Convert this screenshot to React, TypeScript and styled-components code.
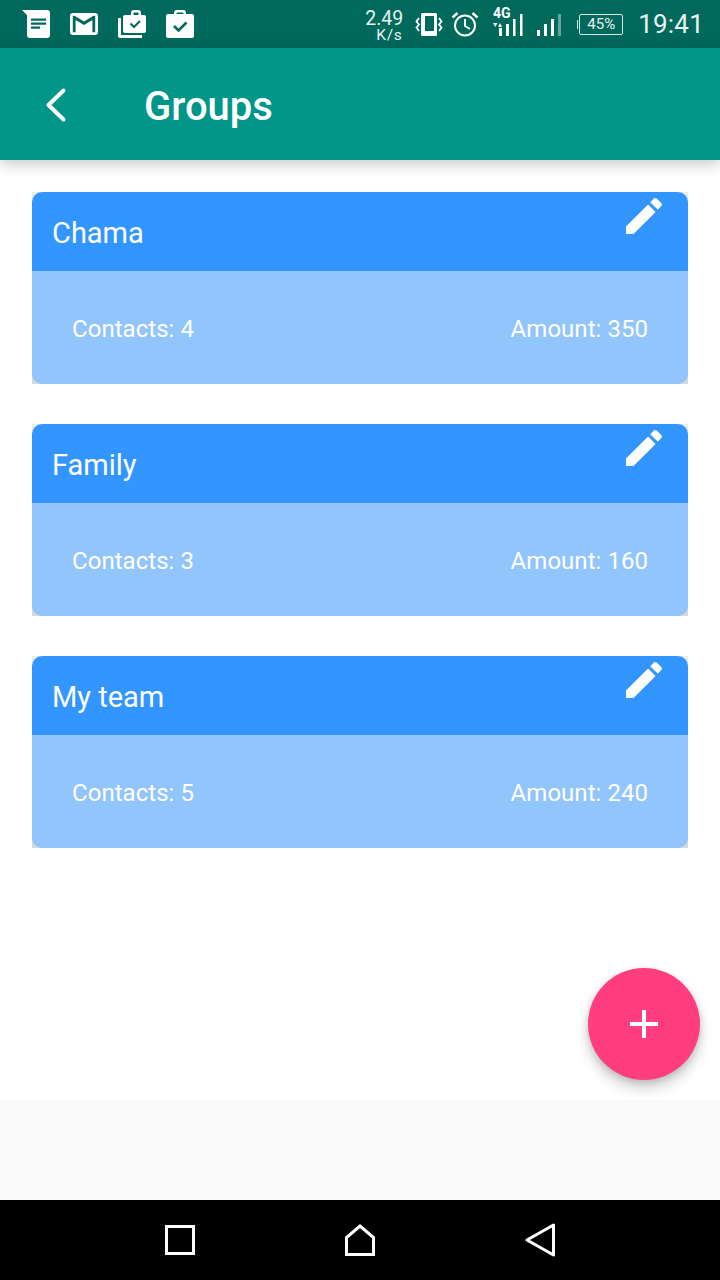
import React from "react";
import styled, { createGlobalStyle } from "styled-components";

/**
 * TYPES
 */
type Group = {
  name: string
  contacts: number
  amount: number
}

/**
 * DATA
 */
const GROUPS: Group[] = [
  { name: "Chama", contacts: 4, amount: 350 },
  { name: "Family", contacts: 3, amount: 160 },
  { name: "My team", contacts: 5, amount: 240 },
];

/**
 * STYLES
 */
const GlobalStyle = createGlobalStyle`
  html, body {
    margin: 0;
    padding: 0;
    background: #fff;
    font-family: Roboto, "Noto Sans", sans-serif;
  }
`;

const Screen = styled.div`
  width: 720px;
  height: 1280px;
  display: flex;
  flex-direction: column;
  overflow: hidden;
`;

const StatusBar = styled.div`
  height: 48px;
  flex: none;
  padding: 0 16px 0 22px;
  display: flex;
  align-items: center;
  justify-content: space-between;
  background: #00695c;
  color: #fff;
`;

const StatusGroup = styled.div`
  display: flex;
  align-items: center;
`;

const StatusIcon = styled.svg<{ $left?: number }>`
  display: block;
  flex: none;
  margin-left: ${(p) => p.$left || 0}px;
`;

const NetSpeed = styled.div`
  width: 40px;
  margin-top: 6px;
  display: flex;
  flex-direction: column;
  align-items: flex-end;
  color: #e4f1ef;
`;

const NetValue = styled.span`
  font-size: 19.5px;
  line-height: 16.5px;
`;

const NetUnit = styled.span`
  font-size: 15.5px;
  line-height: 16.5px;
  letter-spacing: 0.6px;
  margin-right: 1px;
`;

const Battery = styled.div`
  position: relative;
  width: 44px;
  height: 21px;
  margin-left: 18px;
  box-sizing: border-box;
  border: 1px solid #d5e8e5;
  border-radius: 2px;
  display: flex;
  align-items: center;
  justify-content: center;
  font-size: 15px;
  color: #e4f1ef;

  &::before {
    content: "";
    position: absolute;
    left: -3px;
    top: 5px;
    width: 1px;
    height: 9px;
    background: #d5e8e5;
  }
`;

const Clock = styled.span`
  margin-left: 15px;
  font-size: 26px;
  letter-spacing: 0.2px;
  color: #e9f4f2;
`;

const AppBar = styled.header`
  height: 112px;
  flex: none;
  position: relative;
  z-index: 1;
  padding-left: 45px;
  display: flex;
  align-items: center;
  background: #009688;
  box-shadow: 0 4px 14px rgba(0, 0, 0, 0.22);
`;

const BackIcon = styled.svg`
  display: block;
  margin-top: 2px;
`;

const Title = styled.h1`
  margin: 4px 0 0 75px;
  font-size: 40px;
  font-weight: 500;
  color: #fff;
`;

const Main = styled.main`
  flex: 1;
  position: relative;
  padding: 32px 32px 0;
  display: flex;
  flex-direction: column;
  gap: 40px;
  background: #fff;
`;

const Card = styled.section`
  height: 192px;
  flex: none;
  background: linear-gradient(#efe9e6, #d8d8d8);
`;

const CardInner = styled.div`
  height: 100%;
  display: flex;
  flex-direction: column;
  border-radius: 10px;
  overflow: hidden;
`;

const CardHeader = styled.div`
  height: 79px;
  flex: none;
  padding: 0 20px;
  display: flex;
  justify-content: space-between;
  background: #3395ff;
  color: #fff;
`;

const CardName = styled.span`
  margin-top: 23px;
  font-size: 29px;
  line-height: 36px;
`;

const EditIcon = styled.svg`
  display: block;
`;

const CardBody = styled.div`
  flex: 1;
  padding: 2px 40px 0;
  display: flex;
  align-items: center;
  justify-content: space-between;
  background: #93c5fd;
  color: #fff;
  font-size: 24px;
  letter-spacing: 0.04px;
`;

const Fab = styled.button`
  position: absolute;
  right: 20px;
  bottom: 20px;
  width: 112px;
  height: 112px;
  padding: 0;
  border: none;
  border-radius: 50%;
  display: flex;
  align-items: center;
  justify-content: center;
  background: #ff3d7f;
  box-shadow: 0 8px 14px rgba(0, 0, 0, 0.2), 0 2px 6px rgba(0, 0, 0, 0.12);
`;

const Footer = styled.div`
  height: 100px;
  flex: none;
  background: #fafafa;
`;

const NavBar = styled.nav`
  height: 80px;
  flex: none;
  display: flex;
  align-items: center;
  justify-content: center;
  gap: 150px;
  background: #000;
`;

/**
 * COMPONENT
 */
export const App = () => (
  <Screen>
    <GlobalStyle />
    <StatusBar>
      <StatusGroup>
        <StatusIcon width="28" height="28" viewBox="0 0 28 28">
          <path fill="#fff" d="M0 0h25a3 3 0 0 1 3 3v22a3 3 0 0 1-3 3H8a3 3 0 0 1-3-3V5z" />
          <path fill="#00695c" d="M9 8.500h15v2.200H9zM9 12.500h15v2.200H9zM9 16.500h9v2.200H9z" />
        </StatusIcon>
        <StatusIcon $left={20} width="28" height="22" viewBox="2 4 20 16" preserveAspectRatio="none">
          <path fill="#fff" d="M20 4H4c-1.100 0-2 .9-2 2v12c0 1.100.9 2 2 2h16c1.100 0 2-.9 2-2V6c0-1.100-.9-2-2-2zm0 14h-2V9l-6 3.750L6 9v9H4V6h1.200L12 10.250 18.800 6H20v12z" />
        </StatusIcon>
        <StatusIcon $left={20} width="28" height="28" viewBox="0 0 28 28">
          <path fill="#fff" d="M0 8h3v17h21v3H2a2 2 0 0 1-2-2z" />
          <path fill="#fff" fillRule="evenodd" d="M13 5V3a3 3 0 0 1 3-3h4a3 3 0 0 1 3 3v2h3a2 2 0 0 1 2 2v14a2 2 0 0 1-2 2H7a2 2 0 0 1-2-2V7a2 2 0 0 1 2-2zM15.500 5h5V3a.5.5 0 0 0-.5-.5h-4a.5.5 0 0 0-.5.5z" />
          <path fill="none" stroke="#00695c" strokeWidth="2" d="M12.500 13.500l3.500 3.500 6-6" />
        </StatusIcon>
        <StatusIcon $left={20} width="28" height="28" viewBox="0 0 28 28">
          <path fill="#fff" fillRule="evenodd" d="M8 4V3a3 3 0 0 1 3-3h6a3 3 0 0 1 3 3v1h6a2 2 0 0 1 2 2v20a2 2 0 0 1-2 2H2a2 2 0 0 1-2-2V6a2 2 0 0 1 2-2zM10.500 4h7V3a.5.5 0 0 0-.5-.5h-6a.5.5 0 0 0-.5.5z" />
          <path fill="none" stroke="#00695c" strokeWidth="2.600" d="M8 16l4.500 4.500 8-8" />
        </StatusIcon>
      </StatusGroup>
      <StatusGroup>
        <NetSpeed>
          <NetValue>2.49</NetValue>
          <NetUnit>K/s</NetUnit>
        </NetSpeed>
        <StatusIcon $left={12} width="28" height="26" viewBox="0 0 28 26">
          <path fill="#fff" fillRule="evenodd" d="M7.500 2h13a1.500 1.500 0 0 1 1.500 1.500v20a1.500 1.500 0 0 1-1.500 1.500h-13A1.500 1.500 0 0 1 6 23.500v-20A1.500 1.500 0 0 1 7.500 2zM10 5v15h9V5z" />
          <path fill="none" stroke="#fff" strokeWidth="1.800" d="M4 7L1.500 10.500 4 13.500 1.500 16.500 4 20M24 7l2.500 3.500-2.500 3 2.500 3-2.500 3.500" />
        </StatusIcon>
        <StatusIcon $left={8} width="28" height="26" viewBox="0 0 28 26">
          <circle cx="14" cy="14.500" r="10" fill="none" stroke="#fff" strokeWidth="2" />
          <path fill="none" stroke="#fff" strokeWidth="2" d="M14 8v7l5 3" />
          <path fill="none" stroke="#fff" strokeWidth="2.400" d="M1.500 6.500L6.500 2M26.500 6.500L21.500 2" />
        </StatusIcon>
        <StatusIcon $left={13} width="32" height="42" viewBox="0 -4 32 42">
          <text x="1" y="10.500" fontFamily="Roboto, sans-serif" fontSize="14" fontWeight="700" fill="#fff">4G</text>
          <path fill="#fff" d="M1 16h4.500l-2.250 4zM6 20l2-4 2 4z" />
          <path fill="#fff" d="M7 21h3v8H7zM14 17h3v12h-3zM21 12h2.500v17H21zM28 7h2.500v22H28z" />
        </StatusIcon>
        <StatusIcon $left={13} width="24" height="24" viewBox="0 0 24 24">
          <path fill="#fff" d="M0 18h3v6H0zM7 12h3v12H7zM14 7h3v17h-3z" />
          <path fill="#fff" opacity="0.4" d="M21 2h3v22h-3z" />
        </StatusIcon>
        <Battery>45%</Battery>
        <Clock>19:41</Clock>
      </StatusGroup>
    </StatusBar>

    <AppBar>
      <BackIcon width="24" height="36" viewBox="0 0 24 36">
        <path fill="none" stroke="#fff" strokeWidth="4" strokeLinecap="round" strokeLinejoin="round" d="M18.500 3.500L3.500 18l15 14.500" />
      </BackIcon>
      <Title>Groups</Title>
    </AppBar>

    <Main>
      {GROUPS.map((group) => (
        <Card key={group.name}>
          <CardInner>
            <CardHeader>
              <CardName>{group.name}</CardName>
              <EditIcon width="48" height="48" viewBox="0 0 24 24">
                <path fill="#fff" d="M3 17.250V21h3.750L17.810 9.940l-3.750-3.750L3 17.250zM20.710 7.040c.39-.39.39-1.020 0-1.410l-2.340-2.340c-.39-.39-1.020-.39-1.410 0l-1.830 1.830 3.750 3.750 1.830-1.830z" />
              </EditIcon>
            </CardHeader>
            <CardBody>
              <span>Contacts: {group.contacts}</span>
              <span>Amount: {group.amount}</span>
            </CardBody>
          </CardInner>
        </Card>
      ))}
      <Fab aria-label="Add group">
        <svg width="28" height="28" viewBox="0 0 28 28">
          <path fill="#fff" d="M12 0h4v12h12v4H16v12h-4V16H0v-4h12z" />
        </svg>
      </Fab>
    </Main>

    <Footer />

    <NavBar>
      <svg width="30" height="30" viewBox="0 0 30 30">
        <rect x="1.500" y="1.500" width="27" height="27" fill="none" stroke="#fff" strokeWidth="3" />
      </svg>
      <svg width="30" height="32" viewBox="0 0 30 32">
        <path fill="none" stroke="#fff" strokeWidth="3" d="M1.500 30.500V13.500L15 2l13.500 11.500v17z" />
      </svg>
      <svg width="30" height="34" viewBox="0 0 30 34">
        <path fill="none" stroke="#fff" strokeWidth="3" strokeLinejoin="round" d="M28.500 2v30L2 17z" />
      </svg>
    </NavBar>
  </Screen>
);

export default App;
